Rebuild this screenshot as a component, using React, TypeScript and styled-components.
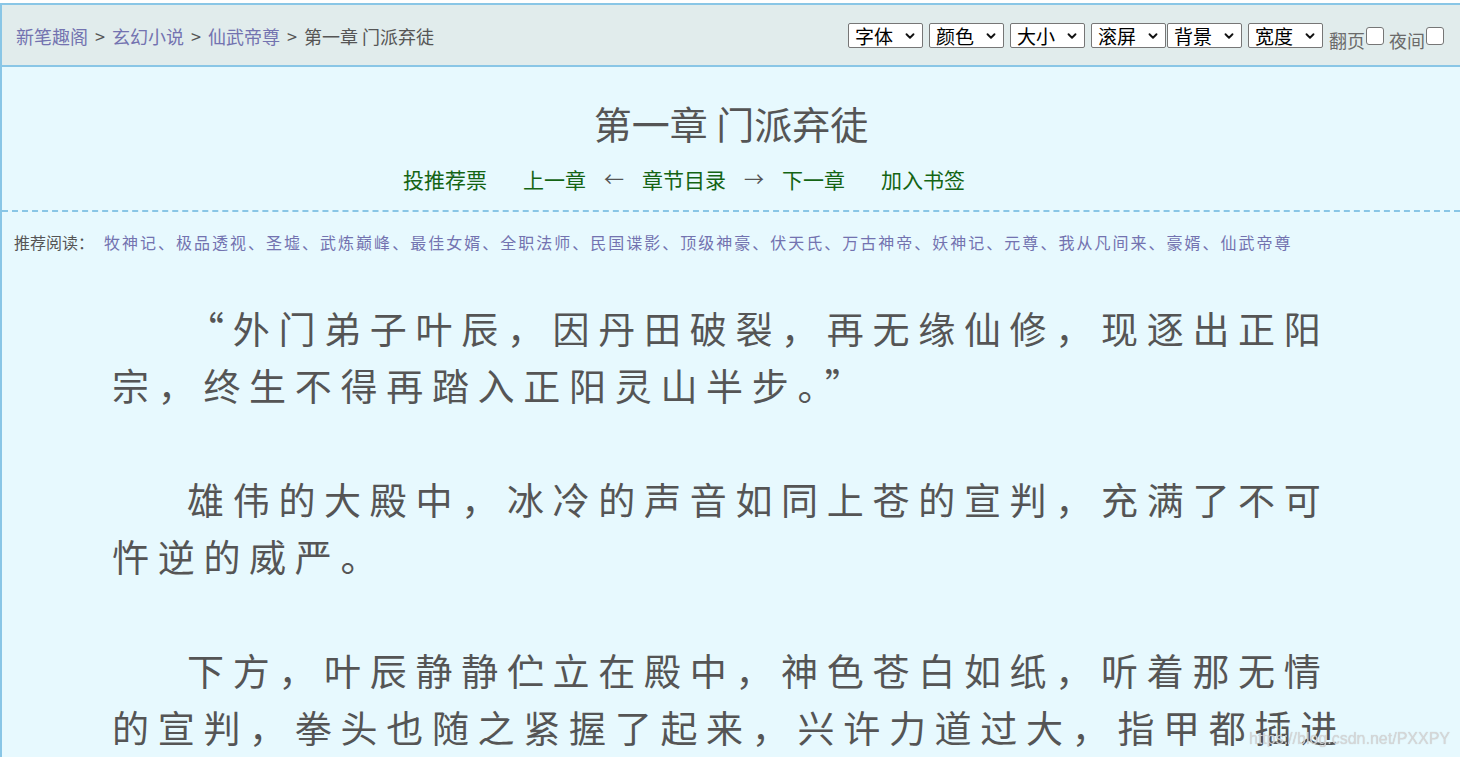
import React from 'react';
import styled, {createGlobalStyle} from 'styled-components';
import {ChevronDown} from 'lucide-react';

const GlobalStyle = createGlobalStyle`
  html, body {
    margin: 0;
    padding: 0;
    overflow: hidden;
    background: #ffffff;
  }
  body {
    padding-top: 3px;
    font-family: "Noto Sans CJK SC", "Noto Sans", sans-serif;
  }
`;

const BLUE = '#89c6e6';

const Page = styled.div`
  border-top: 2px solid ${BLUE};
  border-left: 2px solid ${BLUE};
  background: #e7f9fe;
  min-height: 760px;
`;

const TopBar = styled.div`
  height: 60px;
  display: flex;
  align-items: center;
  justify-content: space-between;
  padding: 0 16px 0 14px;
  background: #e1ecec;
  border-bottom: 2px solid ${BLUE};
`;

const Crumbs = styled.div`
  display: flex;
  align-items: center;
  gap: 7px;
  font-size: 18px;
  color: #555;
  padding-top: 2px;
`;

const CrumbLink = styled.a`
  color: #7373b0;
  text-decoration: none;
`;

const Controls = styled.div`
  display: flex;
  align-items: center;
`;

const PickerWrap = styled.div<{tight?: boolean}>`
  position: relative;
  margin-left: ${({tight}) => (tight ? '1px' : '6px')};

  svg {
    position: absolute;
    right: 6px;
    top: 6px;
    pointer-events: none;
  }
`;

const Picker = styled.select`
  appearance: none;
  -webkit-appearance: none;
  display: block;
  height: 25px;
  width: 75px;
  padding: 0 0 0 6px;
  font-family: "Noto Sans CJK SC", sans-serif;
  font-size: 19px;
  line-height: 23px;
  color: #000;
  background: #fff;
  border: 1px solid #767676;
  border-radius: 2px;
`;

const Toggle = styled.label<{first?: boolean}>`
  display: flex;
  align-items: flex-end;
  margin-left: ${({first}) => (first ? '6px' : '5px')};
  font-size: 18px;
  color: #6a6a6a;
  line-height: 1;
  padding-top: 6px;
`;

const Check = styled.input`
  appearance: none;
  -webkit-appearance: none;
  width: 18px;
  height: 18px;
  margin: 0 0 4px 1px;
  background: #fff;
  border: 1px solid #767676;
  border-radius: 3px;
`;

const ChapterHead = styled.div`
  text-align: center;
  padding: 33px 0 16px;
  border-bottom: 2px dashed ${BLUE};
`;

const Title = styled.h1`
  margin: 0;
  font-size: 38px;
  font-weight: normal;
  line-height: 46px;
  color: #555;
`;

const NavRow = styled.div`
  margin-top: 18px;
  display: flex;
  justify-content: center;
  align-items: center;
  font-size: 21px;
  line-height: 30px;
  padding-right: 94px;
`;

const NavLink = styled.a`
  color: #146414;
  text-decoration: none;
  margin: 0 18px;
`;

const Arrow = styled.span`
  color: #555;
  font-size: 20px;
`;

const Recommend = styled.div`
  padding: 18px 12px 0;
  font-size: 16px;
  line-height: 24px;
  color: #555;
  white-space: nowrap;
`;

const RecLabel = styled.span`
  margin-right: 10px;
`;

const RecLink = styled.a`
  color: #7373b0;
  text-decoration: none;
  letter-spacing: 2px;
`;

const Content = styled.div`
  padding: 46px 100px 0 110px;
  font-size: 37px;
  line-height: 57px;
  letter-spacing: 8.7px;
  color: #555;
`;

const Para = styled.p`
  margin: 0 0 57px;
  text-indent: 75px;
`;

const Watermark = styled.div`
  position: fixed;
  right: 10px;
  bottom: 9px;
  font-family: "Liberation Sans", Arial, sans-serif;
  font-size: 16px;
  color: rgba(215, 215, 215, 0.9);
  text-shadow: 0 0 1px rgba(120, 120, 120, 0.4);
`;

const books = [
  '牧神记', '极品透视', '圣墟', '武炼巅峰', '最佳女婿', '全职法师', '民国谍影',
  '顶级神豪', '伏天氏', '万古神帝', '妖神记', '元尊', '我从凡间来', '豪婿', '仙武帝尊',
];

const pickers = ['字体', '颜色', '大小', '滚屏', '背景', '宽度'];

const paragraphs = [
  '“外门弟子叶辰，因丹田破裂，再无缘仙修，现逐出正阳宗，终生不得再踏入正阳灵山半步。”',
  '雄伟的大殿中，冰冷的声音如同上苍的宣判，充满了不可忤逆的威严。',
  '下方，叶辰静静伫立在殿中，神色苍白如纸，听着那无情的宣判，拳头也随之紧握了起来，兴许力道过大，指甲都插进了肉里，鲜血淋漓。',
];

const App: React.FC = () => (
  <>
    <GlobalStyle />
    <Page>
      <TopBar>
        <Crumbs>
          <CrumbLink href="#">新笔趣阁</CrumbLink>
          <span>&gt;</span>
          <CrumbLink href="#">玄幻小说</CrumbLink>
          <span>&gt;</span>
          <CrumbLink href="#">仙武帝尊</CrumbLink>
          <span>&gt;</span>
          <span>第一章 门派弃徒</span>
        </Crumbs>
        <Controls>
          {pickers.map(p => (
            <PickerWrap key={p} tight={p === '背景'}>
              <Picker defaultValue={p}>
                <option value={p}>{p}</option>
              </Picker>
              <ChevronDown size={14} strokeWidth={3.2} color="#111" />
            </PickerWrap>
          ))}
          <Toggle first>
            翻页<Check type="checkbox" />
          </Toggle>
          <Toggle>
            夜间<Check type="checkbox" />
          </Toggle>
        </Controls>
      </TopBar>

      <ChapterHead>
        <Title>第一章 门派弃徒</Title>
        <NavRow>
          <NavLink href="#">投推荐票</NavLink>
          <NavLink href="#">上一章</NavLink>
          <Arrow>←</Arrow>
          <NavLink href="#">章节目录</NavLink>
          <Arrow>→</Arrow>
          <NavLink href="#">下一章</NavLink>
          <NavLink href="#">加入书签</NavLink>
        </NavRow>
      </ChapterHead>

      <Recommend>
        <RecLabel>推荐阅读：</RecLabel>
        {books.map((b, i) => (
          <React.Fragment key={b}>
            <RecLink href="#">{b}</RecLink>
            {i < books.length - 1 && <RecLink as="span">、</RecLink>}
          </React.Fragment>
        ))}
      </Recommend>

      <Content>
        {paragraphs.map(p => (
          <Para key={p}>{p}</Para>
        ))}
      </Content>
    </Page>
    <Watermark>https://blog.csdn.net/PXXPY</Watermark>
  </>
);

export default App;
